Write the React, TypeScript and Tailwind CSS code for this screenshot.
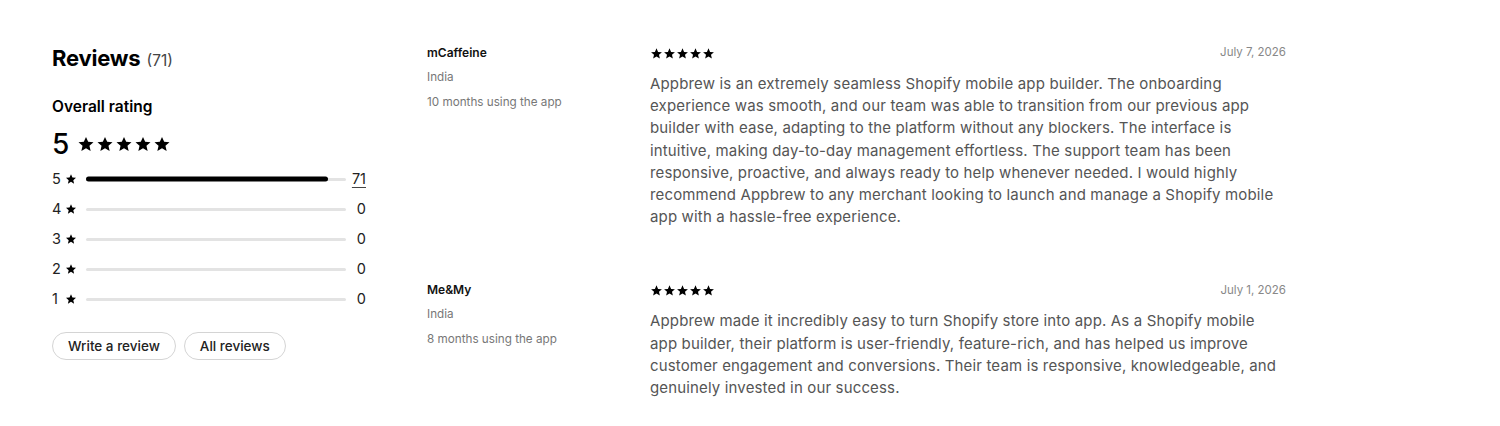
import React from 'react';

interface Review {
  id: number;
  store: string;
  country: string;
  usage: string;
  date: string;
  rating: number;
  body: string;
}

const reviews: Review[] = [
  {
    id: 1,
    store: 'mCaffeine',
    country: 'India',
    usage: '10 months using the app',
    date: 'July 7, 2026',
    rating: 5,
    body:
      'Appbrew is an extremely seamless Shopify mobile app builder. The onboarding experience was smooth, and our team was able to transition from our previous app builder with ease, adapting to the platform without any blockers. The interface is intuitive, making day-to-day management effortless. The support team has been responsive, proactive, and always ready to help whenever needed. I would highly recommend Appbrew to any merchant looking to launch and manage a Shopify mobile app with a hassle-free experience.',
  },
  {
    id: 2,
    store: 'Me&My',
    country: 'India',
    usage: '8 months using the app',
    date: 'July 1, 2026',
    rating: 5,
    body:
      'Appbrew made it incredibly easy to turn Shopify store into app. As a Shopify mobile app builder, their platform is user-friendly, feature-rich, and has helped us improve customer engagement and conversions. Their team is responsive, knowledgeable, and genuinely invested in our success.',
  },
];

const distribution = [
  { stars: 5, count: 71 },
  { stars: 4, count: 0 },
  { stars: 3, count: 0 },
  { stars: 2, count: 0 },
  { stars: 1, count: 0 },
];

const Star: React.FC<{ className?: string }> = ({ className }) => (
  <svg viewBox="0 0 24 24" className={className} fill="currentColor">
    <path d="M12 2.5l2.9 6.6 7.1.6-5.4 4.7 1.6 7-6.2-3.7-6.2 3.7 1.6-7L2 9.7l7.1-.6L12 2.5z" />
  </svg>
);

const Stars: React.FC<{ count: number; className: string; gap: string }> = ({ count, className, gap }) => (
  <div className={`flex items-center ${gap}`}>
    {Array.from({ length: count }).map((_, i) => (
      <Star key={i} className={className} />
    ))}
  </div>
);

const total = distribution.reduce((sum, d) => sum + d.count, 0);

const App: React.FC = () => {
  return (
    <div className="min-h-screen bg-white font-['Inter',sans-serif] text-black">
      <div className="flex pl-[52px] pt-[44px]">
        {/* summary */}
        <div className="w-[314px] shrink-0 mr-[61px]">
          <h2 className="flex items-baseline gap-[6px] leading-[28px]">
            <span className="text-[22px] font-bold tracking-[-0.2px]">Reviews</span>
            <span className="text-[15.5px] text-[#444]">(71)</span>
          </h2>
          <p className="mt-[22px] text-[15.5px] font-semibold leading-[20px]">Overall rating</p>
          <div className="mt-[10px] flex items-center gap-[8px]">
            <span className="text-[28px] font-medium leading-[34px]">5</span>
            <Stars count={5} className="w-[18px] h-[18px]" gap="gap-[1px]" />
          </div>
          <div className="mt-[8px] flex flex-col gap-[10px]">
            {distribution.map((d) => (
              <div key={d.stars} className="flex items-center h-[20px]">
                <span className="w-[13px] text-[14.5px] text-[#222]">{d.stars}</span>
                <Star className="w-[12px] h-[12px] mr-[9px]" />
                <div className="relative flex-1 h-[3px] rounded-full bg-[#e3e3e3]">
                  <div
                    className="absolute left-0 top-1/2 -translate-y-1/2 h-[5px] rounded-full bg-black"
                    style={{ width: total ? `${(d.count / total) * 93}%` : '0%' }}
                  />
                </div>
                <span
                  className={`ml-[4px] w-[16px] text-right text-[14.5px] text-[#222] ${
                    d.count > 0 ? 'underline underline-offset-[3px] decoration-[#444]' : ''
                  }`}
                >
                  {d.count}
                </span>
              </div>
            ))}
          </div>
          <div className="mt-[23px] flex gap-[8px]">
            <button className="h-[28px] px-[15px] rounded-full border border-[#d4d4d4] text-[13.5px] font-medium text-[#222]">
              Write a review
            </button>
            <button className="h-[28px] px-[15px] rounded-full border border-[#d4d4d4] text-[13.5px] font-medium text-[#222]">
              All reviews
            </button>
          </div>
        </div>

        {/* review list */}
        <div className="w-[859px] flex flex-col gap-[53px]">
          {reviews.map((r) => (
            <div key={r.id} className="flex">
              <div className="w-[223px] shrink-0 pt-[2px]">
                <p className="text-[12px] font-semibold leading-[14px] text-[#111]">{r.store}</p>
                <p className="mt-[10px] text-[11.7px] leading-[14px] text-[#777]">{r.country}</p>
                <p className="mt-[11px] text-[11.7px] leading-[14px] text-[#777]">{r.usage}</p>
              </div>
              <div className="w-[636px]">
                <div className="flex items-center justify-between h-[18px]">
                  <Stars count={r.rating} className="w-[13px] h-[13px]" gap="gap-0" />
                  <span className="text-[11.5px] text-[#888]">{r.date}</span>
                </div>
                <p className="mt-[11px] text-[15px] leading-[22.2px] tracking-[0.15px] text-[#555]">{r.body}</p>
              </div>
            </div>
          ))}
        </div>
      </div>
    </div>
  );
};

export default App;
